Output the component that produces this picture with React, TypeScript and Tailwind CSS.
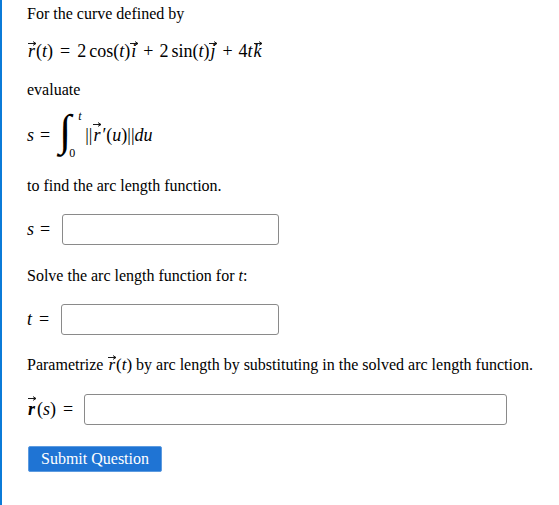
import React from "react";

function Arrow({ w = 9 }: { w?: number }) {
  return (
    <svg
      width={w}
      height={5}
      viewBox={`0 0 ${w} 5`}
      className="absolute left-1/2 top-[0px] -translate-x-1/2"
    >
      <line x1="0.5" y1="2.5" x2={w - 1} y2="2.5" stroke="#000" strokeWidth="0.9" />
      <path d={`M${w - 3.5} 0.6 L${w - 0.5} 2.5 L${w - 3.5} 4.4`} fill="none" stroke="#000" strokeWidth="0.9" />
    </svg>
  );
}

function Vec({ ch, bold = false }: { ch: string; bold?: boolean }) {
  return (
    <span className={`relative inline-block px-[1px] font-['Liberation_Serif',serif] italic ${bold ? "font-bold" : ""}`}>
      <Arrow />
      {ch}
    </span>
  );
}

function I({ children }: { children: React.ReactNode }) {
  return <span className="font-['Liberation_Serif',serif] italic">{children}</span>;
}

function R({ children, className = "" }: { children: React.ReactNode; className?: string }) {
  return <span className={`font-['Liberation_Serif',serif] ${className}`}>{children}</span>;
}

function Input({ w }: { w: string }) {
  return (
    <div className={`${w} h-[31px] rounded-[3px] border border-[#8a8a8a] bg-white`} />
  );
}

export default function App() {
  return (
    <div className="min-h-[505px] w-[559px] border-l-2 border-[#0b7bd8] bg-white pl-[25px] font-['Liberation_Serif','Times_New_Roman',serif] text-black">
      <div className="pt-[4px] text-[16px] leading-[20px]">For the curve defined by</div>

      <div className="mt-[15px] flex h-[22px] items-end text-[18px] leading-[20px] whitespace-pre">
        <Vec ch="r" />
        <R>(</R>
        <I>t</I>
        <R>)</R>
        <R className="mx-[7px]">=</R>
        <R>2</R>
        <R className="ml-[3px]">cos(</R>
        <I>t</I>
        <R>)</R>
        <Vec ch="i" />
        <R className="mx-[6px]">+</R>
        <R>2</R>
        <R className="ml-[3px]">sin(</R>
        <I>t</I>
        <R>)</R>
        <Vec ch="j" />
        <R className="mx-[6px]">+</R>
        <R>4</R>
        <I>t</I>
        <Vec ch="k" />
      </div>

      <div className="mt-[19px] text-[16px] leading-[20px]">evaluate</div>

      <div className="mt-[11px] flex h-[48px] items-center text-[18px]">
        <I>s</I>
        <R className="ml-[6px] mr-[9px]">=</R>
        <div className="relative h-[48px] w-[24px]">
          <R className="absolute left-[0px] top-[-8px] text-[44px] italic leading-[56px]">∫</R>
          <R className="absolute left-[19px] top-[-1px] text-[12px] italic leading-[12px]">t</R>
          <R className="absolute left-[10px] top-[36px] text-[12px] leading-[12px]">0</R>
        </div>
        <R className="ml-[2px]">||</R>
        <Vec ch="r" />
        <R className="ml-[1px]">′(</R>
        <I>u</I>
        <R>)||</R>
        <I>du</I>
      </div>

      <div className="mt-[17px] text-[16px] leading-[20px]">to find the arc length function.</div>

      <div className="mt-[18px] flex h-[31px] items-center text-[18px]">
        <I>s</I>
        <R className="ml-[6px]">=</R>
        <div className="ml-[12px]"><Input w="w-[217px]" /></div>
      </div>

      <div className="mt-[21px] text-[16px] leading-[20px]">
        Solve the arc length function for <I>t</I>:
      </div>

      <div className="mt-[17px] flex h-[32px] items-center text-[18px]">
        <I>t</I>
        <R className="ml-[7px]">=</R>
        <div className="ml-[12px]"><Input w="w-[218px]" /></div>
      </div>

      <div className="mt-[20px] text-[16px] leading-[20px]">
        Parametrize <span className="text-[17px]"><Vec ch="r" />(<I>t</I>)</span> by arc length by substituting in the solved arc length function.
      </div>

      <div className="mt-[19px] flex h-[31px] items-center text-[18px]">
        <Vec ch="r" bold />
        <R className="ml-[1px]">(</R>
        <I>s</I>
        <R>)</R>
        <R className="ml-[7px]">=</R>
        <div className="ml-[11px]"><Input w="w-[423px]" /></div>
      </div>

      <button className="mt-[21px] ml-[1px] h-[26px] w-[134px] rounded-[2px] border border-[#5d9be0] bg-[#1f74d4] font-['Liberation_Serif','Times_New_Roman',serif] text-[16px] leading-[20px] text-white">
        Submit Question
      </button>
    </div>
  );
}
